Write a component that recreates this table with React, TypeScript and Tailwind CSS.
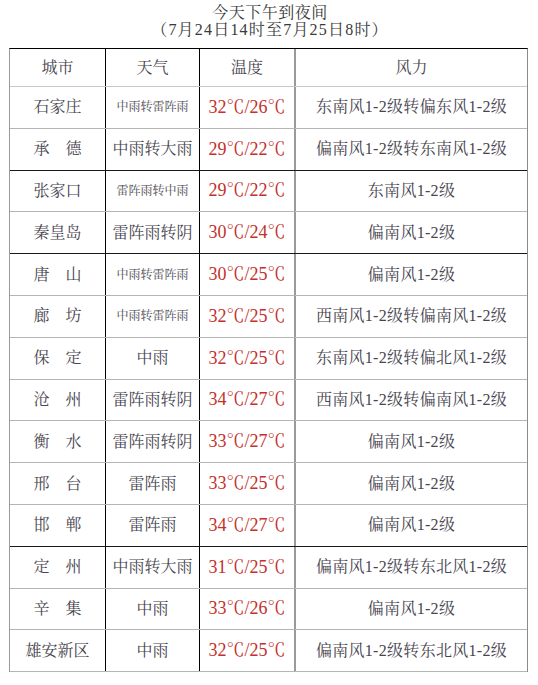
const rows: {
  city: string;
  weather: string;
  small?: boolean;
  temp: string;
  wind: string;
  dark?: boolean;
}[] = [
  { city: "石家庄", weather: "中雨转雷阵雨", small: true, temp: "32℃/26℃", wind: "东南风1-2级转偏东风1-2级" },
  { city: "承　德", weather: "中雨转大雨", temp: "29℃/22℃", wind: "偏南风1-2级转东南风1-2级", dark: true },
  { city: "张家口", weather: "雷阵雨转中雨", small: true, temp: "29℃/22℃", wind: "东南风1-2级" },
  { city: "秦皇岛", weather: "雷阵雨转阴", temp: "30℃/24℃", wind: "偏南风1-2级", dark: true },
  { city: "唐　山", weather: "中雨转雷阵雨", small: true, temp: "30℃/25℃", wind: "偏南风1-2级" },
  { city: "廊　坊", weather: "中雨转雷阵雨", small: true, temp: "32℃/25℃", wind: "西南风1-2级转偏南风1-2级" },
  { city: "保　定", weather: "中雨", temp: "32℃/25℃", wind: "东南风1-2级转偏北风1-2级" },
  { city: "沧　州", weather: "雷阵雨转阴", temp: "34℃/27℃", wind: "西南风1-2级转偏南风1-2级" },
  { city: "衡　水", weather: "雷阵雨转阴", temp: "33℃/27℃", wind: "偏南风1-2级" },
  { city: "邢　台", weather: "雷阵雨", temp: "33℃/25℃", wind: "偏南风1-2级" },
  { city: "邯　郸", weather: "雷阵雨", temp: "34℃/27℃", wind: "偏南风1-2级", dark: true },
  { city: "定　州", weather: "中雨转大雨", temp: "31℃/25℃", wind: "偏南风1-2级转东北风1-2级" },
  { city: "辛　集", weather: "中雨", temp: "33℃/26℃", wind: "偏南风1-2级" },
  { city: "雄安新区", weather: "中雨", temp: "32℃/25℃", wind: "偏南风1-2级转东北风1-2级" },
];

const font = {
  fontFamily: '"Liberation Serif", "Noto Serif CJK SC", "Noto Sans CJK SC", serif',
};

export default function App() {
  return (
    <div className="w-[538px] h-[685px] bg-white text-[#48454f]" style={font}>
      {/* Title */}
      <div className="pt-[4px] h-[48px] text-center text-[16px] leading-[17px] text-[#3a3a3a] pl-[2px]">
        <p className="tracking-[0.5px]">今天下午到夜间</p>
        <p className="tracking-[1.2px]">（7月24日14时至7月25日8时）</p>
      </div>

      {/* Table */}
      <div className="ml-[9px] w-[519px] border-l border-r border-t border-l-[#9a9a9a] border-r-[#8a8a8a] border-t-black">
        <div className="grid grid-cols-[96px_94px_96px_1fr] h-[38px] border-b border-[#c8c8c8] text-[16px]">
          <div className="flex items-center justify-center border-r border-black">城市</div>
          <div className="flex items-center justify-center border-r border-black">天气</div>
          <div className="flex items-center justify-center border-r-2 border-[#9a9a9a]">温度</div>
          <div className="flex items-center justify-center">风力</div>
        </div>
        {rows.map((r, i) => (
          <div
            key={i}
            className={
              "grid grid-cols-[96px_94px_96px_1fr] h-[41.8px] border-b " +
              (r.dark ? "border-[#1a1a1a]" : "border-[#b5b5b5]")
            }
          >
            <div className="flex items-center justify-center border-r border-black text-[16px]">
              {r.city}
            </div>
            <div
              className={
                "flex items-center justify-center border-r border-black " +
                (r.small ? "text-[12px]" : "text-[16px]")
              }
            >
              {r.weather}
            </div>
            <div className="flex items-center justify-center border-r-2 border-[#9a9a9a] text-[18px] text-[#c4302b]">
              {r.temp}
            </div>
            <div className="flex items-center justify-center text-[16px] tracking-[0.3px]">
              {r.wind}
            </div>
          </div>
        ))}
      </div>
    </div>
  );
}
